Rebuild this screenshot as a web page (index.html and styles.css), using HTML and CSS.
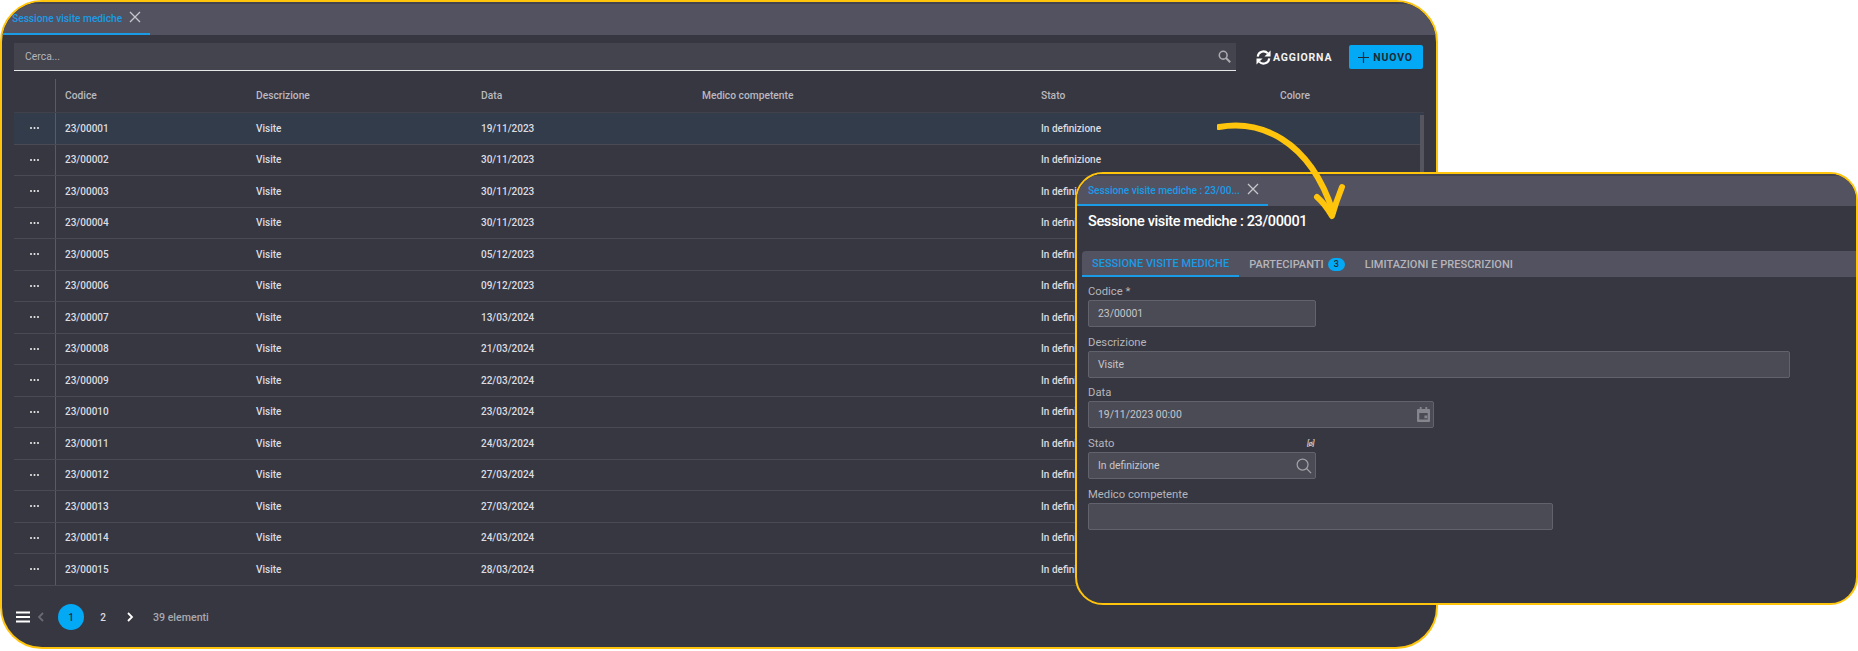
FILE: index.html
```html
<!DOCTYPE html>
<html lang="en">
<head>
    <meta charset="UTF-8">
    <title>Sessione visite mediche</title>
    <link rel="stylesheet" href="styles.css">
</head>
<body>

    <!-- Main window: list -->
    <section class="window window-main">
        <div class="tabbar">
            <div class="tab tab-main">
                <span class="tab-title">Sessione visite mediche</span>
                <svg class="tab-close" width="12" height="12" viewBox="0 0 12 12"><path d="M1 1l10 10M11 1L1 11"/></svg>
            </div>
        </div>

        <div class="toolbar">
            <div class="search">
                <span>Cerca...</span>
                <svg width="13" height="13" viewBox="0 0 13 13" fill="none" stroke="#a9a9ae" stroke-width="1.6"><circle cx="5.2" cy="5.2" r="3.9"/><path d="M8 8l4.2 4.2" stroke-width="2"/></svg>
            </div>
            <button class="btn-refresh">
                <svg width="15" height="15" viewBox="0 0 16 16" fill="none" stroke="#fff" stroke-width="2.2"><path d="M1.8 7A6.2 6.2 0 0 1 12.6 3.6"/><path d="M14.2 9A6.2 6.2 0 0 1 3.4 12.4"/><path d="M15.5 0.5v6.5H9z" fill="#fff" stroke="none"/><path d="M0.5 15.5V9H7z" fill="#fff" stroke="none"/></svg>
                AGGIORNA
            </button>
            <button class="btn-new">
                <svg width="11" height="11" viewBox="0 0 11 11"><path d="M5.5 0v11M0 5.5h11" stroke="#1d2a38" stroke-width="1.2"/></svg>
                NUOVO
            </button>
        </div>

        <div class="grid">
            <div class="grid-row grid-head">
                <div class="cell-menu"></div>
                <div>Codice</div>
                <div>Descrizione</div>
                <div>Data</div>
                <div>Medico competente</div>
                <div>Stato</div>
                <div>Colore</div>
            </div>
            <div id="rows"></div>
            <div class="scrollbar"></div>
        </div>

        <div class="pager">
            <svg class="pager-menu" width="14" height="12" viewBox="0 0 14 12"><path d="M0 1.5h14M0 6h14M0 10.5h14" stroke="#fff" stroke-width="1.8"/></svg>
            <svg class="pager-prev" width="7" height="10" viewBox="0 0 7 10" fill="none"><path d="M6 1L2 5l4 4" stroke="#6a6a72" stroke-width="1.8"/></svg>
            <span class="page page-on">1</span>
            <span class="page">2</span>
            <svg class="pager-next" width="7" height="10" viewBox="0 0 7 10" fill="none"><path d="M1 1l4 4-4 4" stroke="#fff" stroke-width="1.8"/></svg>
            <span class="pager-count">39 elementi</span>
        </div>
    </section>

    <!-- Detail window -->
    <section class="window window-detail">
        <div class="tabbar">
            <div class="tab tab-detail">
                <span class="tab-title">Sessione visite mediche : 23/00...</span>
                <svg class="tab-close" width="12" height="12" viewBox="0 0 12 12"><path d="M1 1l10 10M11 1L1 11"/></svg>
            </div>
        </div>

        <h1 class="detail-title">Sessione visite mediche : 23/00001</h1>

        <div class="subtabs">
            <div class="subtab subtab-on">SESSIONE VISITE MEDICHE</div>
            <div class="subtab">PARTECIPANTI <span class="badge">3</span></div>
            <div class="subtab">LIMITAZIONI E PRESCRIZIONI</div>
        </div>

        <form class="form">
            <div class="field w-short">
                <label>Codice *</label>
                <div class="input">23/00001</div>
            </div>
            <div class="field w-full">
                <label>Descrizione</label>
                <div class="input">Visite</div>
            </div>
            <div class="field w-date">
                <label>Data</label>
                <div class="input">19/11/2023 00:00
                    <svg width="13" height="15" viewBox="0 0 14 16" fill="#85858d"><path d="M3 0h2v2h4V0h2v2h2a1 1 0 0 1 1 1v12a1 1 0 0 1-1 1H1a1 1 0 0 1-1-1V3a1 1 0 0 1 1-1h2zM2.5 6.5v7h9v-7zM8 9h3v3H8z" fill-rule="evenodd"/></svg>
                </div>
            </div>
            <div class="field w-short">
                <label>Stato <i class="lookup-tag">[ø]</i></label>
                <div class="input">In definizione
                    <svg width="16" height="16" viewBox="0 0 17 17" fill="none" stroke="#a2a2a8" stroke-width="1.3"><circle cx="7" cy="7" r="5.8"/><path d="M11.2 11.2L16 16"/></svg>
                </div>
            </div>
            <div class="field w-medico">
                <label>Medico competente</label>
                <div class="input"></div>
            </div>
        </form>
    </section>

    <!-- Arrow between the two windows -->
    <svg class="arrow" width="140" height="110" viewBox="0 0 140 110" fill="none" stroke="#ffc40c" stroke-linecap="round" stroke-linejoin="round">
        <path d="M2 9C42 2 92 20 116 94" stroke-width="6"/>
        <path d="M100 79Q108 86 115 98Q119 84 125 69" stroke-width="6"/>
    </svg>

    <script>
        // Rows of the list
        const rowData = [
            ['23/00001', '19/11/2023'], ['23/00002', '30/11/2023'], ['23/00003', '30/11/2023'],
            ['23/00004', '30/11/2023'], ['23/00005', '05/12/2023'], ['23/00006', '09/12/2023'],
            ['23/00007', '13/03/2024'], ['23/00008', '21/03/2024'], ['23/00009', '22/03/2024'],
            ['23/00010', '23/03/2024'], ['23/00011', '24/03/2024'], ['23/00012', '27/03/2024'],
            ['23/00013', '27/03/2024'], ['23/00014', '24/03/2024'], ['23/00015', '28/03/2024']
        ];

        const dots = '<svg width="9" height="2" viewBox="0 0 9 2" fill="#f2f2f2"><circle cx="1" cy="1" r="1"/><circle cx="4.5" cy="1" r="1"/><circle cx="8" cy="1" r="1"/></svg>';

        document.getElementById('rows').innerHTML = rowData.map((r, idx) => `
            <div class="grid-row ${idx === 0 ? 'row-on' : ''}">
                <div class="cell-menu">${dots}</div>
                <div>${r[0]}</div>
                <div>Visite</div>
                <div>${r[1]}</div>
                <div></div>
                <div>In definizione</div>
                <div></div>
            </div>`).join('');
    </script>

</body>
</html>
```

FILE: styles.css
```css
* {
    box-sizing: border-box;
}

html, body {
    height: 651px;
    overflow: hidden;
}

body {
    margin: 0;
    background-color: #fff;
    font-family: Roboto, Arial, sans-serif;
    color: #dcdce0;
    position: relative;
}

.window {
    background-color: #373741;
    border: 2px solid #ffc40c;
    overflow: hidden;
    display: flex;
    flex-direction: column;
}

.window-main {
    width: 1438px;
    height: 649px;
    border-radius: 42px;
}

.window-detail {
    position: absolute;
    left: 1075px;
    top: 172px;
    width: 783px;
    height: 433px;
    border-radius: 28px;
}

.tabbar {
    height: 33px;
    flex: none;
    padding-top: 2px;
    background-color: #535260;
    display: flex;
    box-shadow: inset 0 2px 0 #43434d;
}

.window-detail .tabbar {
    height: 32px;
}

.tab {
    display: flex;
    align-items: center;
    border-bottom: 2px solid #1a9be6;
    color: #1a9be6;
    font-size: 10.2px;
    font-weight: 500;
}

.tab-main {
    width: 148px;
    padding-left: 10px;
}

.tab-detail {
    width: 191px;
    padding-left: 11px;
    letter-spacing: -0.05px;
}

.tab-title {
    white-space: nowrap;
}

.tab-close {
    margin-left: 7px;
    margin-top: -3px;
    fill: none;
    stroke: #c6c6cb;
    stroke-width: 1.3;
}

/* toolbar */
.toolbar {
    display: flex;
    align-items: flex-start;
    padding: 8px 0 0 12px;
    height: 44px;
    flex: none;
}

.search {
    width: 1222px;
    height: 28px;
    background-color: #44444e;
    border-bottom: 1px solid #e6e6e8;
    display: flex;
    align-items: center;
    justify-content: space-between;
    padding: 0 5px 0 11px;
    font-size: 10.4px;
    color: #b5b5ba;
}

button {
    font-family: Roboto, Arial, sans-serif;
    border: none;
    display: flex;
    align-items: center;
    font-size: 10.5px;
    font-weight: 700;
    letter-spacing: 0.8px;
}

.btn-refresh {
    margin-left: 20px;
    margin-top: 2px;
    height: 24px;
    padding: 0;
    gap: 2px;
    background: none;
    color: #f2f2f2;
}

.btn-new {
    margin-left: 17px;
    margin-top: 2px;
    width: 74px;
    height: 24px;
    padding: 0 0 0 9px;
    gap: 4px;
    background-color: #03a9f4;
    color: #1d2a38;
    border-radius: 2px;
}

/* grid */
.grid {
    position: relative;
    margin: 0 0 0 12px;
    width: 1410px;
    height: 513px;
    flex: none;
    overflow: hidden;
    font-size: 10px;
    font-weight: 500;
}

.grid-row {
    display: grid;
    grid-template-columns: 42px 191px 225px 221px 339px 239px 1fr;
    height: 31.5px;
    align-items: center;
    border-bottom: 1px solid #4a4a54;
}

.grid-row > div {
    padding-left: 9px;
    height: 100%;
    display: flex;
    align-items: center;
}

.grid-row > .cell-menu {
    padding-left: 0;
    justify-content: center;
    border-right: 1px solid #5a5a64;
}

.grid-head {
    height: 34px;
    font-size: 10.25px;
    color: #b9b9bf;
    border-bottom-color: #41414b;
}

.row-on {
    background-color: #323c4b;
}

.scrollbar {
    position: absolute;
    right: 0;
    top: 36px;
    width: 4px;
    height: 200px;
    background-color: #55555f;
}

/* pager */
.pager {
    display: flex;
    align-items: center;
    height: 50px;
    padding-left: 14px;
    font-size: 10px;
    font-weight: 500;
}

.pager-prev {
    margin-left: 7px;
}

.page {
    width: 26px;
    height: 26px;
    border-radius: 50%;
    display: flex;
    align-items: center;
    justify-content: center;
}

.page-on {
    margin-left: 14px;
    background-color: #03a9f4;
    color: #1d2a38;
}

.page + .page {
    margin-left: 6px;
}

.pager-next {
    margin-left: 11px;
}

.pager-count {
    margin-left: 19px;
    font-size: 10.6px;
    color: #a9a9ae;
}

/* detail */
.detail-title {
    margin: 0;
    height: 45px;
    flex: none;
    padding: 6px 0 0 11px;
    font-size: 14.5px;
    line-height: 20px;
    font-weight: 500;
    letter-spacing: -0.35px;
    color: #fff;
}

.subtabs {
    margin-left: 5px;
    height: 26px;
    flex: none;
    background-color: #535260;
    border-radius: 4px 0 0 4px;
    display: flex;
    font-size: 11px;
    font-weight: 500;
    letter-spacing: 0.03px;
    color: #b5b5ba;
}

.subtab {
    padding: 0 10px;
    display: flex;
    align-items: center;
    gap: 4px;
}

.subtab-on {
    color: #1a9be6;
    border-bottom: 2px solid #1a9be6;
}

.badge {
    width: 17px;
    height: 13px;
    border-radius: 7px;
    background-color: #03a9f4;
    color: #1d2a38;
    font-size: 9px;
    display: flex;
    align-items: center;
    justify-content: center;
}

.form {
    padding: 7px 0 0 11px;
    display: flex;
    flex-direction: column;
    gap: 7.7px;
}

.field label {
    display: flex;
    justify-content: space-between;
    height: 16px;
    line-height: 16px;
    font-size: 11.25px;
    color: #b5b5ba;
}

.lookup-tag {
    font-size: 8px;
    letter-spacing: -0.5px;
    color: #e6e6e8;
    margin-right: 2px;
}

.input {
    height: 27px;
    background-color: #4b4b55;
    border: 1px solid #62626c;
    border-radius: 2px;
    padding: 0 3px 0 9px;
    display: flex;
    align-items: center;
    justify-content: space-between;
    font-size: 10.4px;
    color: #c6c6cb;
}

.w-short {
    width: 228px;
}

.w-full {
    width: 702px;
}

.w-date {
    width: 346px;
}

.w-medico {
    width: 465px;
}

.arrow {
    position: absolute;
    left: 1217px;
    top: 118px;
}
```
